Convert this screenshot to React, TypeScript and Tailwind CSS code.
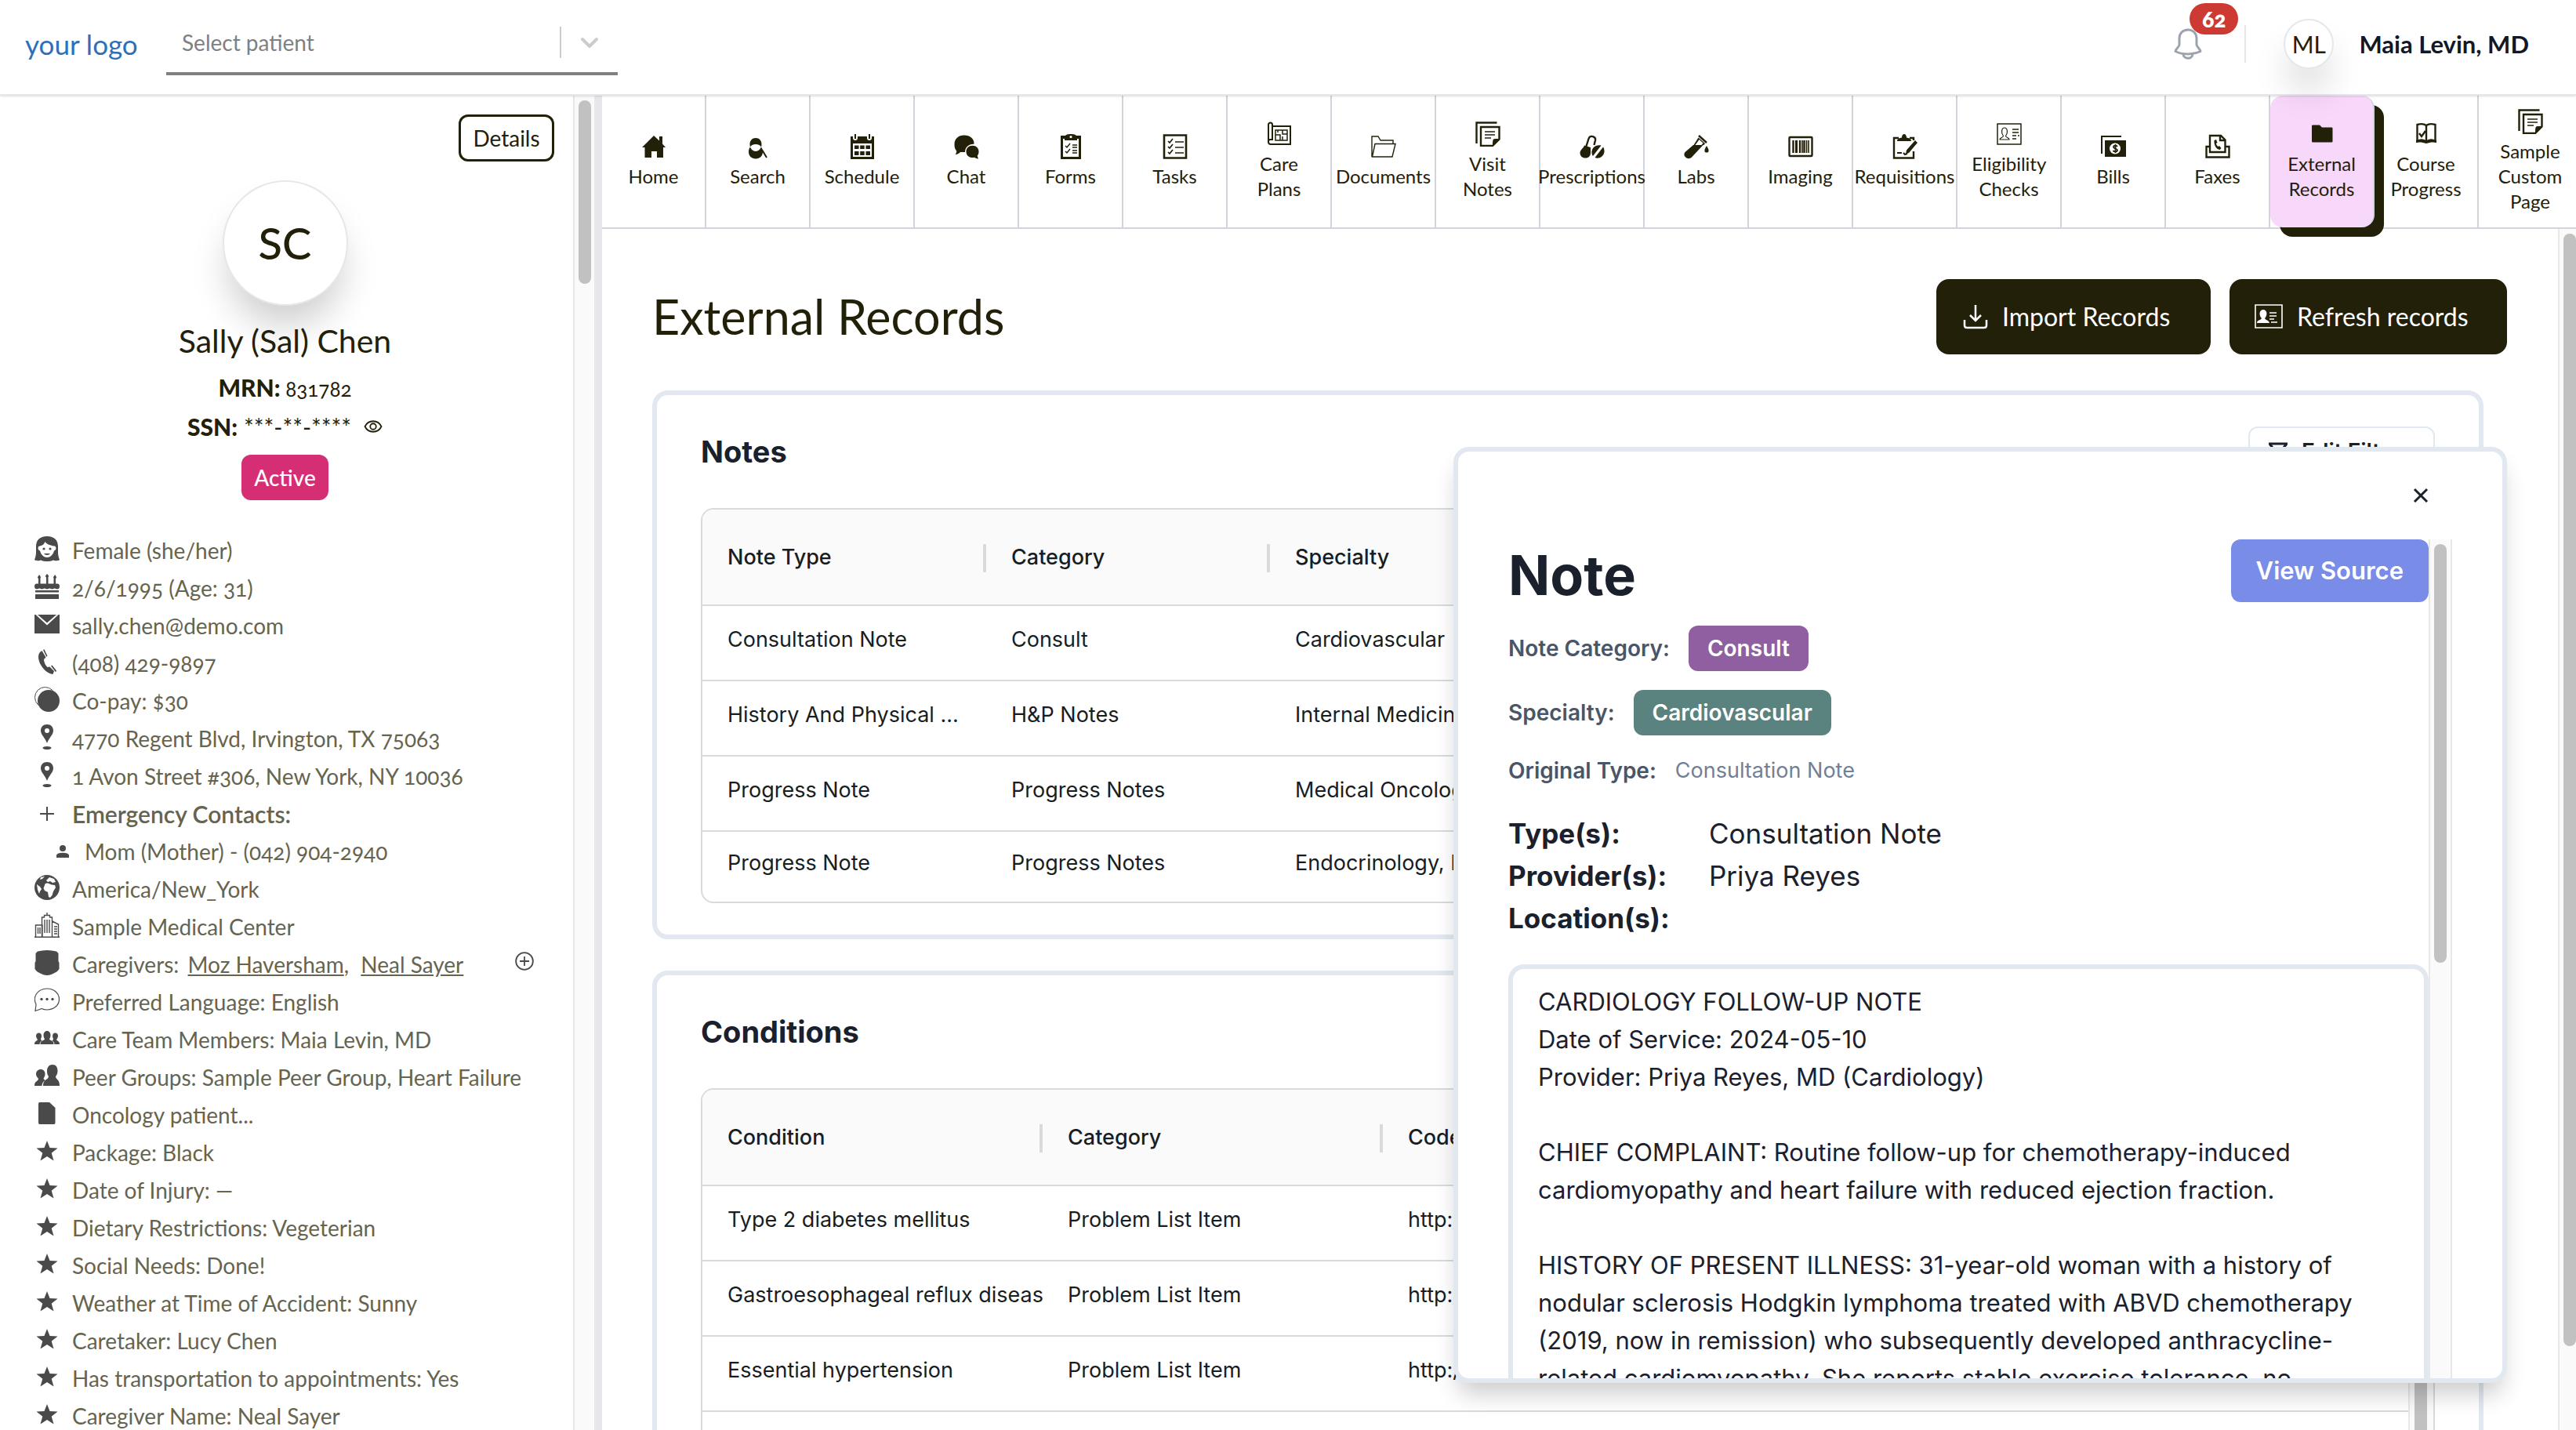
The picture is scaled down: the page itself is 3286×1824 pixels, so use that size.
import type { ReactNode } from 'react'

type IconProps = { children: ReactNode; className?: string; box?: string }

function Svg({ children, className = 'size-8', box = '0 0 32 32' }: IconProps) {
  return (
    <svg viewBox={box} className={`shrink-0 ${className}`} fill="currentColor" aria-hidden="true">
      {children}
    </svg>
  )
}

const line = { fill: 'none', stroke: 'currentColor', strokeWidth: 2 }

/* Tab icons */

const homeIcon = (
  <Svg>
    <path d="M16 2 1 17h3.500v13H13v-8h7v8h8V17h3L27 12.500V3h-4v5.500z" />
  </Svg>
)

const searchIcon = (
  <Svg>
    <path fillRule="evenodd" d="M13 5c4.500 0 7.500 3.500 7.500 8 0 1.500-.2 2.500-.6 3.600 1.400 1.800 2.100 3.600 2.100 5.900 0 5.500-3.500 9-9 9s-9-3.500-9-9c0-2.300.7-4.300 2-5.900-.3-1.100-.5-2.100-.5-3.600 0-4.500 3-8 7.500-8zm0 8c-3.500 0-6 1.400-7 3.600 1 2.900 3.700 5.400 7 5.400s5.900-2.500 6.900-5.400C18.900 14.400 16.500 13 13 13z" />
    <path {...line} d="m21 20 6 10" />
  </Svg>
)

const scheduleIcon = (
  <Svg>
    <path fillRule="evenodd" d="M1 3h3v2a3 3 0 0 0 6 0V3h12v2a3 3 0 0 0 6 0V3h3v29H1zm3 9v17h24V12zm2 2.500h5.500V19H6zm7.200 0h5.500V19h-5.500zm7.300 0H26V19h-5.500zM6 22h5.500v5H6zm7.200 0h5.500v5h-5.500zm7.300 0H26v5h-5.500z" />
    <path d="M6 0h2v6H6zM24 0h2v6h-2z" />
  </Svg>
)

const chatIcon = (
  <Svg>
    <path d="M13 1.500c7.500 0 12.500 4.500 12.500 10.200v1C18.500 12.500 14 17 14 23H8c-1 1.500-3.500 3-6.500 3 1.200-1.300 1.800-3 1.700-4.600C1.200 19.300.5 17 .5 13 .5 6 5.500 1.500 13 1.500z" />
    <path d="M23.500 14.800c4.800 0 8 3.400 8 7.600 0 2-.6 3.800-1.700 5.200 0 1.500.5 2.800 1.500 3.800-2 .1-4-.6-5-1.700-6.500 1.300-10.800-2.300-10.800-7.300 0-4.200 3.200-7.600 8-7.600z" />
  </Svg>
)

const formsIcon = (
  <Svg>
    <path fillRule="evenodd" d="M3 2h6c1.500-2.700 12.500-2.700 14 0h6v30H3zm3 4v23h20V6h-2v2H8V6zm10-4a1.600 1.600 0 1 0 0 3.200A1.600 1.600 0 0 0 16 2z" />
    <path {...line} strokeWidth={1.5} d="m9 15 2 2 4-5M9 22l2 2 4-5M18 14h6M18 17h6M18 21h6M18 24h6" />
  </Svg>
)

const tasksIcon = (
  <Svg>
    <path {...line} strokeWidth={2.6} d="M2 1.500h28v29H2z" />
    <path {...line} strokeWidth={1.7} d="m7 9 2 2 4-5M7 16l2 2 4-5M7 23l2 2 4-5M16 10h11M16 17h11M16 24h11" />
  </Svg>
)

const carePlansIcon = (
  <Svg>
    <path {...line} d="M2 26V4a2.500 2.500 0 0 1 5 0v19H4.500A2.500 2.500 0 0 0 2 26c0 1.600 1 3 3 3h25V6H7" />
    <path {...line} strokeWidth={1.500} d="M11 11h15v13H11zM11 17h6v7M20 11v5h6M20 19v5M14 11v3" />
  </Svg>
)

const documentsIcon = (
  <Svg>
    <path {...line} strokeWidth={1.400} d="M1 29V3h8l3 5h16v4M1.500 29 5 12.500h26L27 29z" />
  </Svg>
)

const pagesIcon = (
  <Svg>
    <path {...line} strokeWidth={2.400} d="M1.500 28V1.500h26" />
    <path {...line} strokeWidth={2.400} d="M7 7h23.500v15.500L22 31H7z" />
    <path d="M30.500 22H25c-3 0-3 3-3 9z" />
    <path {...line} strokeWidth={1.500} d="M12 13h13M12 17h13M12 21h8" />
  </Svg>
)

const pillsIcon = (
  <Svg>
    <path {...line} strokeWidth={2.400} d="M8 17 11.500 6C13 1 21 2.500 20 8l-1.500 6" />
    <path d="M6 14.500 14 17v7c0 9-13.500 8.500-13.500 0 0-3.800 4-5.500 5.500-9.500z" />
    <path d="M27.500 14.500c-6-1.200-10.800 1.700-12 7.500-.4 2 .3 4.500 1.500 6zM30 16.500 19.500 30c4.500 2.200 11.500-1 12-7.500.1-2.600-.5-4.500-1.500-6z" />
  </Svg>
)

const labsIcon = (
  <Svg>
    <path {...line} strokeWidth={2.400} d="m19 2 10 9" />
    <path d="M18.500 4.500 27 12l-1.500 2H12.500zM12 14h12.500L10 29.500C5.500 34-2.500 28.500 1.500 23z" />
    <path fill="#fff" d="m19.500 7 5 4.500-2 2.500h-8z" />
    <path d="M29 15c-1.800 3-2.600 4.500-2.600 6a2.600 2.600 0 0 0 5.200 0c0-1.500-.8-3-2.600-6z" />
  </Svg>
)

const imagingIcon = (
  <Svg>
    <rect {...line} strokeWidth={2.400} x="1.500" y="4" width="29" height="24" rx="1" />
    <path {...line} strokeWidth={2.400} d="M6.500 8v16M15 8v16M20.500 8v16" />
    <path {...line} strokeWidth={3} d="M10.500 8v16" />
    <path {...line} strokeWidth={1.600} d="M18 8v16M23.500 8v16M26 8v16" />
  </Svg>
)

const requisitionsIcon = (
  <Svg>
    <path {...line} strokeWidth={2.400} d="M8 5H2v25.500h25V22M22 5h5v3" />
    <path d="M6 9c0-3 3-4 6-4.500C12-1.500 18-1.500 18 4.500c3 .5 6 1.500 6 4.500zM29 8l3 3-11 13-4 1.500 1-5z" />
    <path {...line} d="M6 24h6M14 24l2 2 3-1" />
  </Svg>
)

const eligibilityIcon = (
  <Svg>
    <path {...line} strokeWidth={1.500} d="M1 3h30v26H1z" />
    <path {...line} strokeWidth={1.200} d="M4 23c0-3 4-2 4.500-4.500C5 14 6.500 8 10 8s5 6 1.500 10.500C12 21 16 20 16 23z" />
    <path {...line} strokeWidth={1.600} d="M20 10h8M20 14h8M20 18h5M20 22h5M27 18h2" />
  </Svg>
)

const billsIcon = (
  <Svg>
    <path {...line} d="M1 25V3h25" />
    <path fillRule="evenodd" d="M5 8h27v21H5zm13 3.500a7 7 0 1 0 0 14 7 7 0 0 0 0-14z" />
    <path {...line} strokeWidth={1.800} d="M21 16c-1-2-5-2-5 .5s5 1.500 5 4-4.500 2.500-5.500.5M18.500 13v11" />
  </Svg>
)

const faxIcon = (
  <Svg>
    <path {...line} strokeWidth={2.400} d="M6 16H1.500v13.500h29V16H26M6 23V2h14l5.500 5.500V23zM19 2v6h6" />
    <path d="M11.500 8 14 7l1.500 4-1.700 1c.5 1.700 1.500 3 2.700 4l1.500-1 2.500 3-2 2c-4.500-.5-7.500-6-7-12z" />
  </Svg>
)

const folderIcon = (
  <Svg>
    <path d="M3 6c0-1 .5-1.500 1.500-1.500H13l3 3h12c1 0 1.500.5 1.500 1.500v16c0 1-.5 1.500-1.500 1.500H4.500C3.500 26.500 3 26 3 25z" />
  </Svg>
)

const courseIcon = (
  <Svg>
    <path {...line} strokeWidth={2.400} d="M16 5c-4-3-8-2-11.500-1v21c4-2 8-2 11.500 1 3.500-3 7.500-3 11.500-1V4C24 3 20 2 16 5zM16 5v20" />
    <path d="M3 24c5-2 9-1 13 2 4-3 8-4 13-2v3c-4-1-9-.500-13 1-4-1.500-9-2-13-1z" />
    <path {...line} strokeWidth={2.400} d="m7 15 3 4 5-7" />
  </Svg>
)

/* Patient detail icons */

const femaleIcon = (
  <Svg>
    <path fillRule="evenodd" d="M16 0c9 0 14 5 14 13 0 8-.5 11 2 17-1.500 1.500-6 1.500-8 .5-5 2-11 2-16 0-2 1-6.500 1-8-.5C2.500 24 2 21 2 13 2 5 7 0 16 0zM7 12.500C4 12 3.500 18 7 18.500c1.500 5.500 5 8.500 9 8.500s7.500-3 9-8.500c3.500-.5 3-6.500 0-6C21 12 15 10 13.500 7 12.500 10 10 12 7 12.500z" />
    <circle cx="12" cy="16" r="1.600" />
    <circle cx="20" cy="16" r="1.600" />
    <path d="M12 22h8c-1.500 2.500-6.500 2.500-8 0z" />
  </Svg>
)

const cakeIcon = (
  <Svg>
    <path d="M0 16c0-2.500 1-3.500 3-3.500h26c2 0 3 1 3 3.500s-1.500 3.500-3 3.500-2-1-3.300-1-1.700 1-3.200 1-2-1-3.200-1-1.800 1-3.300 1-2-1-3.300-1-1.700 1-3.200 1-2-1-3.200-1-1.800 1-3.300 1c-1.500 0-3-1-3-3.500zM1 21h30v2.500H1zM1 26h30v6H1z" />
    <path d="M5 6h2.500v7H5zM15 4h2.500v9H15zM24.500 6H27v7h-2.500zM6 1c1.500 2 2 2.500 2 3.500S7 6 6 6 4 5.500 4 4.500 5 3 6 1zM16 0c1.500 1.500 2 2 2 3s-1 1.500-2 1.500S14 4 14 3s1-1.500 2-3zM26 1c1.500 2 2 2.500 2 3.500S27 6 26 6s-2-.5-2-1.500S25 3 26 1z" />
  </Svg>
)

const mailIcon = (
  <Svg>
    <path d="M0 4h1.500L16 17.500 30.500 4H32v24H0z" />
    <path d="M4 4h24L16 14.500z" />
  </Svg>
)

const phoneIcon = (
  <Svg>
    <path d="M9.500 2C3 5 4.500 14 8 20c3 5.500 8.500 11 15.500 12l1.500-4-5.500-5.500-3 .500c-3-3-4.500-6.500-4.500-10l2.500-2.500z" />
    <path d="m11 1 1.500-.800 4 8.500-1.200 1zM21 21.500l1.500-1 5.500 7-1 1.800z" />
  </Svg>
)

const copayIcon = (
  <Svg>
    <circle {...line} strokeWidth={1} cx="13.500" cy="13.500" r="13" />
    <circle cx="18" cy="18" r="14" />
  </Svg>
)

const pinIcon = (
  <Svg>
    <path fillRule="evenodd" d="M16 0c5 0 8 3.500 8 8 0 5-5.500 9-8 16C13.500 17 8 13 8 8c0-4.500 3-8 8-8zm0 5a3 3 0 1 0 0 6 3 3 0 0 0 0-6z" />
    <ellipse cx="16" cy="30" rx="5.500" ry="2" />
  </Svg>
)

const plusIcon = (
  <Svg>
    <path {...line} d="M16 9v18M7 18h18" />
  </Svg>
)

const personIcon = (
  <Svg className="size-4">
    <circle cx="16" cy="8" r="8" />
    <path d="M0 32v-6c0-9 32-9 32 0v6z" />
  </Svg>
)

const globeIcon = (
  <Svg>
    <circle cx="16" cy="16" r="16" />
    <path fill="#fff" d="M13 13c0-2 2-2.500 4-2.500l5 2 4 .5 1 3-3 5-1.500 5L20 29l-2-1-1-6-4-2-1.500-3zM3 12l4 3 2 3-2 3-1 3-2-5zM15 7l4-4 6 2 2 4-4 1-3-2-3 1zM8 3l5-1-3 3-3 1z" />
  </Svg>
)

const buildingIcon = (
  <Svg>
    <path {...line} strokeWidth={1.400} d="M0 31.300h32M1.500 31V16H10v15M9.500 31V6h3V3.500h7V6h3v25M22.500 11l8 4v16M16 0v3.500M13 9v17M16 9v17M19 9v17M4.500 19v8M7 19v8M25 18h4M25 21h4M25 24h4M25 27h4" />
  </Svg>
)

const caregiversIcon = (
  <Svg>
    <path d="M4 1.500C8 1 12 0 16 0s8 1 12 1.500L30.500 4v10l1 2v8c-1.500 2-3 3.500-5 4.500-3 1.800-7 3.500-10.500 3.500S8.500 30.300 5.500 28.500c-2-1-3.500-2.500-5-4.500v-8l1-2V4z" />
  </Svg>
)

const languageIcon = (
  <Svg>
    <path {...line} strokeWidth={1.200} d="M1 29.500 2 21C-3 11 4.500 1 16 1c9 0 15.500 6 15.500 13.500S25 28 16 28c-3 0-5-.500-7-1.500-2 1-5 2-8 3z" />
    <circle cx="9" cy="14.500" r="1.700" />
    <circle cx="16" cy="14.500" r="1.700" />
    <circle cx="23" cy="14.500" r="1.700" />
  </Svg>
)

const teamIcon = (
  <Svg>
    <path d="M16 7c3 0 4.500 2.500 4.500 5.500 0 2-1 4-1.500 5 1 2 5.500 1.500 5.500 6.500h-17c0-5 4.500-4.500 5.500-6.500-.5-1-1.500-3-1.500-5C11.500 9.500 13 7 16 7zM5.500 9.500c2 0 3.500 1.500 3.500 4 0 2-1 3-1 4.500l1.500 1.500C7.500 21 6.500 22 6.500 24H0c0-4.500 3-3.500 4-6-1-1.500-2-3-2-4.500 0-2.500 1.500-4 3.500-4zM26.500 9.500c2 0 3.500 1.500 3.500 4 0 1.500-1 3-2 4.500 1 2.500 4 1.500 4 6h-6.500c0-2-1-3-3-4.500L24 18c0-1.500-1-2.500-1-4.500 0-2.500 1.500-4 3.500-4z" />
  </Svg>
)

const peersIcon = (
  <Svg>
    <path d="M23 2c4.500 0 6.500 3.500 6.500 8 0 3-1 5-2.500 7 .5 5 5 3 5 12H11c0-9 6.500-7 7-12-1.500-2-2-4-2-7 0-4.500 2.500-8 7-8zM8 8c3.500 0 5.500 2.500 5.500 6 0 3-1.500 4-2 6l2 2C10.500 24 9.500 26 9.500 29H0c0-7 4.500-5 5-9-1.500-2-3-3.500-3-6 0-3.500 2.500-6 6-6z" />
  </Svg>
)

const fileIcon = (
  <Svg>
    <path d="M5 4c0-1.500 1-2 2-2h12l7.500 7v19c0 1.500-1 2-2 2H7c-1 0-2-.5-2-2z" />
  </Svg>
)

const starIcon = (
  <Svg>
    <path d="m16 3 3.500 9 10 .500-7.800 6.200L24.500 28.500 16 23l-8.500 5.500 2.800-9.800L2.500 12.500l10-.5z" />
  </Svg>
)

const tabs: { label: string; icon: ReactNode; active?: boolean }[] = [
  { label: 'Home', icon: homeIcon },
  { label: 'Search', icon: searchIcon },
  { label: 'Schedule', icon: scheduleIcon },
  { label: 'Chat', icon: chatIcon },
  { label: 'Forms', icon: formsIcon },
  { label: 'Tasks', icon: tasksIcon },
  { label: 'Care Plans', icon: carePlansIcon },
  { label: 'Documents', icon: documentsIcon },
  { label: 'Visit Notes', icon: pagesIcon },
  { label: 'Prescriptions', icon: pillsIcon },
  { label: 'Labs', icon: labsIcon },
  { label: 'Imaging', icon: imagingIcon },
  { label: 'Requisitions', icon: requisitionsIcon },
  { label: 'Eligibility Checks', icon: eligibilityIcon },
  { label: 'Bills', icon: billsIcon },
  { label: 'Faxes', icon: faxIcon },
  { label: 'External Records', icon: folderIcon, active: true },
  { label: 'Course Progress', icon: courseIcon },
  { label: 'Sample Custom Page', icon: pagesIcon },
]

const detailsBeforeCaregivers: { icon: ReactNode; text: string; kind?: 'heading' | 'nested' }[] = [
  { icon: femaleIcon, text: 'Female (she/her)' },
  { icon: cakeIcon, text: '2/6/1995 (Age: 31)' },
  { icon: mailIcon, text: 'sally.chen@demo.com' },
  { icon: phoneIcon, text: '(408) 429-9897' },
  { icon: copayIcon, text: 'Co-pay: $30' },
  { icon: pinIcon, text: '4770 Regent Blvd, Irvington, TX 75063' },
  { icon: pinIcon, text: '1 Avon Street #306, New York, NY 10036' },
  { icon: plusIcon, text: 'Emergency Contacts:', kind: 'heading' },
  { icon: personIcon, text: 'Mom (Mother) - (042) 904-2940', kind: 'nested' },
  { icon: globeIcon, text: 'America/New_York' },
  { icon: buildingIcon, text: 'Sample Medical Center' },
]

const detailsAfterCaregivers = [
  { icon: languageIcon, text: 'Preferred Language: English' },
  { icon: teamIcon, text: 'Care Team Members: Maia Levin, MD' },
  { icon: peersIcon, text: 'Peer Groups: Sample Peer Group, Heart Failure' },
  { icon: fileIcon, text: 'Oncology patient...' },
  { icon: starIcon, text: 'Package: Black' },
  { icon: starIcon, text: 'Date of Injury: —' },
  { icon: starIcon, text: 'Dietary Restrictions: Vegeterian' },
  { icon: starIcon, text: 'Social Needs: Done!' },
  { icon: starIcon, text: 'Weather at Time of Accident: Sunny' },
  { icon: starIcon, text: 'Caretaker: Lucy Chen' },
  { icon: starIcon, text: 'Has transportation to appointments: Yes' },
  { icon: starIcon, text: 'Caregiver Name: Neal Sayer' },
]

const notes = [
  ['Consultation Note', 'Consult', 'Cardiovascular'],
  ['History And Physical ...', 'H&P Notes', 'Internal Medicine'],
  ['Progress Note', 'Progress Notes', 'Medical Oncology'],
  ['Progress Note', 'Progress Notes', 'Endocrinology, Internal'],
]

const conditions = [
  ['Type 2 diabetes mellitus', 'Problem List Item', 'http://'],
  ['Gastroesophageal reflux disease', 'Problem List Item', 'http://'],
  ['Essential hypertension', 'Problem List Item', 'http://'],
  ['', '', ''],
]

const noteText = `CARDIOLOGY FOLLOW-UP NOTE
Date of Service: 2024-05-10
Provider: Priya Reyes, MD (Cardiology)

CHIEF COMPLAINT: Routine follow-up for chemotherapy-induced
cardiomyopathy and heart failure with reduced ejection fraction.

HISTORY OF PRESENT ILLNESS: 31-year-old woman with a history of
nodular sclerosis Hodgkin lymphoma treated with ABVD chemotherapy
(2019, now in remission) who subsequently developed anthracycline-
related cardiomyopathy. She reports stable exercise tolerance, no`

function Header() {
  return (
    <header className="relative z-10 flex h-[122px] shrink-0 items-center border-b-2 border-[#e5e7eb] bg-white pr-[60px] pb-2 pl-8 shadow-sm">
      <a href="#" className="w-[180px] text-[35px] leading-10 text-[#2f6fba]">
        your logo
      </a>
      <div className="relative flex h-20 w-[576px] items-center border-b-4 border-[#808080]">
        <select
          aria-label="Select patient"
          className="h-full w-full appearance-none bg-transparent px-5 text-[28px] text-[#808080] outline-none"
        >
          <option>Select patient</option>
        </select>
        <span className="pointer-events-none absolute right-0 flex h-10 w-[74px] items-center justify-center border-l-2 border-[#ccc] text-[#ccc]">
          <Svg className="size-6" box="0 0 24 24">
            <path d="m3 8 9 9 9-9" fill="none" stroke="currentColor" strokeWidth="4" strokeLinecap="round" strokeLinejoin="round" />
          </Svg>
        </span>
      </div>

      <div className="ml-auto flex items-center">
        <button aria-label="Notifications" className="relative text-[#9ca3af]">
          <Svg className="h-10 w-9" box="0 0 36 40">
            <path
              d="M18 2c-6.500 0-11 4.500-11 11v8c0 3-5 5.500-5 8.500 9 4.500 23 4.500 32 0 0-3-5-5.500-5-8.500v-8c0-6.500-4.500-11-11-11zM12 33c0 7 12 7 12 0"
              fill="none"
              stroke="currentColor"
              strokeWidth="3"
              strokeLinejoin="round"
            />
          </Svg>
          <span className="absolute -top-8 left-5 flex h-10 w-[62px] items-center justify-center rounded-full bg-[#cd3a33] text-[28px] font-extrabold text-white oldstyle-nums">
            62
          </span>
        </button>
        <span className="ml-[54px] h-12 w-0.5 bg-[#e5e7eb]" />
        <span className="ml-12 flex size-16 items-center justify-center rounded-full border-2 border-[#e5e7eb] bg-white text-[30px] text-[#232009] shadow-[0_32px_48px_-8px_rgba(0,0,0,0.2)]">
          ML
        </span>
        <span className="ml-8 text-[31px] font-bold text-[#111827]">Maia Levin, MD</span>
      </div>
    </header>
  )
}

function DetailRow({ icon, children, kind }: { icon: ReactNode; children: ReactNode; kind?: string }) {
  return (
    <li className="flex h-12 items-center text-[#66644f]">
      <span className={`flex h-9 items-start text-[#4a4a4a] ${kind === 'nested' ? 'ml-7 w-9 pt-2.5' : 'w-12'}`}>{icon}</span>
      <span className={`whitespace-nowrap oldstyle-nums ${kind === 'heading' ? 'text-[30px] font-semibold' : 'text-[28px]'}`}>{children}</span>
    </li>
  )
}

function Sidebar() {
  return (
    <aside className="flex w-[768px] shrink-0 border-r-8 border-[#e5e7eb] bg-white">
      <div className="flex min-w-0 flex-1 flex-col overflow-hidden pt-6">
        <button className="mr-6 h-[60px] w-[122px] shrink-0 self-end rounded-xl border-[3px] border-[#232009] text-[28px] text-[#232009]">
          Details
        </button>
        <div className="mt-6 flex shrink-0 flex-col items-center pr-1 text-[#232009]">
          <div className="flex size-40 items-center justify-center rounded-full border-2 border-[#e5e7eb] bg-white text-[56px] font-medium shadow-[0_32px_48px_-8px_rgba(0,0,0,0.2)]">
            SC
          </div>
          <h2 className="mt-5 text-[41px] leading-[50px]">Sally (Sal) Chen</h2>
          <p className="mt-2.5 text-[26px] leading-[48px] oldstyle-nums">
            <b className="text-[30px] font-black">MRN:</b> 831782
          </p>
          <p className="flex items-center text-[30px] leading-[48px]">
            <b className="font-black">SSN:</b>
            <span className="ml-2">***-**-****</span>
            <button aria-label="Show SSN" className="ml-4">
              <Svg className="size-6">
                <path {...line} strokeWidth={2.4} d="M2 16c6-12 22-12 28 0-6 12-22 12-28 0z" />
                <circle {...line} strokeWidth={2.4} cx="16" cy="16" r="5" />
              </Svg>
            </button>
          </p>
          <span className="mt-3 flex h-[58px] items-center rounded-xl bg-[#d62e74] px-4 text-[28px] font-medium text-white">Active</span>
        </div>

        <ul className="mt-10 pl-11">
          {detailsBeforeCaregivers.map((d) => (
            <DetailRow key={d.text} icon={d.icon} kind={d.kind}>
              {d.text}
            </DetailRow>
          ))}
          <li className="flex items-center pr-[50px]">
            <ul className="flex-1">
              <DetailRow icon={caregiversIcon}>
                Caregivers:{' '}
                <a href="#" className="ml-1 underline">
                  Moz Haversham
                </a>
                ,{' '}
                <a href="#" className="ml-2 underline">
                  Neal Sayer
                </a>
              </DetailRow>
            </ul>
            <button aria-label="Add caregiver" className="mb-2 text-[#4a4a4a]">
              <Svg className="size-6">
                <circle {...line} strokeWidth={2.4} cx="16" cy="16" r="14.500" />
                <path {...line} strokeWidth={2.4} d="M16 8v16M8 16h16" />
              </Svg>
            </button>
          </li>
          {detailsAfterCaregivers.map((d) => (
            <DetailRow key={d.text} icon={d.icon}>
              {d.text}
            </DetailRow>
          ))}
        </ul>
      </div>
      <div className="w-[29px] border-x-2 border-[#e8e8e8] bg-[#fafafa] px-[5px] pt-1.5">
        <div className="h-[234px] w-4 rounded-full bg-[#c1c1c1]" />
      </div>
    </aside>
  )
}

function TabBar() {
  return (
    <nav className="flex h-[170px] shrink-0 overflow-x-clip border-b-2 border-[#d1d5db] text-[#232009]">
      {tabs.map((tab) => (
        <a
          key={tab.label}
          href="#"
          className={`flex w-[133px] shrink-0 flex-col items-center justify-center gap-1.5 border-r-2 border-[#d1d5db] text-center text-2xl leading-8 ${
            tab.active ? 'rounded-2xl bg-[#f7d8fb] shadow-[12px_12px_0_#232009]' : ''
          }`}
        >
          {tab.icon}
          <span className="w-min">{tab.label}</span>
        </a>
      ))}
    </nav>
  )
}

interface RecordsCardProps {
  title: string
  columns: string[]
  rows: string[][]
  columnClass: string
  scrollable?: boolean
}

function RecordsCard({ title, columns, rows, columnClass, scrollable }: RecordsCardProps) {
  return (
    <section className="rounded-[20px] border-[6px] border-[#e2e8f0] px-14 py-10 font-['Inter',sans-serif]">
      <div className="flex h-16 items-center justify-between">
        <h2 className="text-[38px] font-bold text-[#1a202c]">{title}</h2>
        <button className="flex h-16 w-[238px] items-center gap-[18px] rounded-xl border-2 border-[#e2e8f0] pl-6 text-[28px] font-semibold text-[#1a202c]">
          <Svg className="size-6" box="0 0 24 24">
            <path {...line} strokeWidth={3} d="M1 2h22l-8 10v9l-6-3v-6z" />
          </Svg>
          Edit Filters
        </button>
      </div>
      <div className="mt-10 flex overflow-hidden rounded-2xl border-2 border-[#d9dadb]">
        <table className="w-full table-fixed text-left text-[27px] text-[#181d1f]">
          <colgroup>
            {columns.map((c) => (
              <col key={c} className={columnClass} />
            ))}
            <col />
          </colgroup>
          <thead>
            <tr className="h-[122px] border-b-2 border-[#d9dadb] bg-[#fafafa]">
              {columns.map((c) => (
                <th key={c} className="p-0 pt-0.5 font-medium">
                  <div className="flex h-9 items-center border-r-4 border-[#d9dadb] pl-8">{c}</div>
                </th>
              ))}
              <td />
            </tr>
          </thead>
          <tbody>
            {rows.map((row, i) => (
              <tr key={i} className="h-24 border-b-2 border-[#d9dadb] last:h-[90px] last:border-b-0">
                {row.map((cell, j) => (
                  <td key={j} className="overflow-hidden p-0 pb-2 pl-8 whitespace-nowrap">
                    {cell}
                  </td>
                ))}
                <td />
              </tr>
            ))}
          </tbody>
        </table>
        {scrollable && (
          <div className="w-8 shrink-0 border-l-2 border-[#e8e8e8] bg-[#fafafa] px-1.5 pt-32">
            <div className="h-full w-4 bg-[#c1c1c1]" />
          </div>
        )}
      </div>
    </section>
  )
}

function NotePanel() {
  return (
    <div
      role="dialog"
      aria-label="Note"
      className="absolute top-[278px] right-[65px] bottom-[60px] flex w-[1344px] flex-col overflow-hidden rounded-[20px] border-[6px] border-[#e2e8f0] bg-white pr-16 pl-16 font-['Inter',sans-serif] text-[#1a202c] shadow-[0_20px_30px_-6px_rgba(0,0,0,0.2)]"
    >
      <div className="flex h-28 shrink-0 justify-end pt-9 pr-[30px]">
        <button aria-label="Close" className="h-10">
          <Svg className="size-5" box="0 0 20 20">
            <path {...line} strokeWidth={3} d="m2 2 16 16M18 2 2 18" />
          </Svg>
        </button>
      </div>
      <div className="flex min-h-0 flex-1">
        <div className="min-w-0 flex-1 overflow-hidden">
          <div className="flex items-start justify-between">
            <h2 className="pt-1 text-[70px] leading-[84px] font-bold">Note</h2>
            <button className="h-20 rounded-xl bg-[#798ce8] px-8 text-[31px] font-semibold text-white">View Source</button>
          </div>
          <div className="mt-[22px] flex h-[58px] items-center gap-6 text-[28px] font-semibold text-[#4a5568]">
            Note Category:
            <span className="flex h-[58px] items-center rounded-xl bg-[#8f5fa1] px-6 text-white">Consult</span>
          </div>
          <div className="mt-6 flex h-[58px] items-center gap-6 text-[28px] font-semibold text-[#4a5568]">
            Specialty:
            <span className="flex h-[58px] items-center rounded-xl bg-[#5a827f] px-6 text-white">Cardiovascular</span>
          </div>
          <div className="mt-6 flex h-[42px] items-center gap-6 text-[28px] font-semibold text-[#4a5568]">
            Original Type:
            <span className="text-[27px] font-normal text-[#718096]">Consultation Note</span>
          </div>
          <dl className="mt-8 grid grid-cols-[256px_1fr] text-[35px] leading-[54px]">
            <dt className="font-bold">Type(s):</dt>
            <dd>Consultation Note</dd>
            <dt className="font-bold">Provider(s):</dt>
            <dd>Priya Reyes</dd>
            <dt className="font-bold">Location(s):</dt>
            <dd />
          </dl>
          <div className="mt-8 h-[2000px] rounded-[20px] border-[6px] border-[#e2e8f0] px-8 pt-[18px] text-[31px] leading-[48px] whitespace-pre">
            {noteText}
          </div>
        </div>
        <div className="w-[30px] shrink-0 border-x-2 border-[#e8e8e8] bg-[#fafafa] px-[5px] pt-1.5">
          <div className="h-[534px] w-4 rounded-full bg-[#c1c1c1]" />
        </div>
      </div>
    </div>
  )
}

export default function App() {
  return (
    <div className="flex h-screen flex-col overflow-hidden bg-white font-['Lato',sans-serif]">
      <Header />
      <div className="flex min-h-0 flex-1">
        <Sidebar />
        <div className="flex min-w-0 flex-1 flex-col">
          <TabBar />
          <div className="flex min-h-0 flex-1">
            <main className="relative min-w-0 flex-1 overflow-hidden pt-16 pl-16">
              <div className="flex h-24 items-center gap-6 pr-[65px]">
                <h1 className="mr-auto text-[61px] leading-[64px] text-[#232009]">External Records</h1>
                <button className="flex h-24 w-[350px] items-center gap-[18px] rounded-2xl bg-[#232009] pl-[34px] text-[32px] text-white">
                  <Svg>
                    <path {...line} strokeWidth={2.500} d="M16 1v19M9 14l7 7 7-7M2 20v7c0 2 1 3 3 3h22c2 0 3-1 3-3v-7" />
                  </Svg>
                  Import Records
                </button>
                <button className="flex h-24 w-[354px] items-center gap-[18px] rounded-2xl bg-[#232009] pl-8 text-[32px] text-white">
                  <Svg className="size-9" box="0 0 36 36">
                    <path {...line} strokeWidth={1.6} d="M1 3h34v29H1z" />
                    <path d="M3 26c0-4 5-3.500 6-6-4-4-3-11 2-11s6 7 2 11c1 2.500 5 2 6 6z" />
                    <path {...line} strokeWidth={1.6} d="M19 13h9M19 17h9M19 21h6M21 25h8" />
                  </Svg>
                  Refresh records
                </button>
              </div>
              <div className="mt-[46px] flex flex-col gap-10 pr-[95px]">
                <RecordsCard title="Notes" columns={['Note Type', 'Category', 'Specialty']} rows={notes} columnClass="w-[362px]" />
                <RecordsCard
                  title="Conditions"
                  columns={['Condition', 'Category', 'Code']}
                  rows={conditions}
                  columnClass="w-[434px]"
                  scrollable
                />
              </div>
              <NotePanel />
            </main>
            <div className="w-[23px] shrink-0 border-l-2 border-[#e8e8e8] bg-[#fafafa] pt-1.5 pl-[5px]">
              <div className="h-[93%] w-4 rounded-full bg-[#c1c1c1]" />
            </div>
          </div>
        </div>
      </div>
    </div>
  )
}
